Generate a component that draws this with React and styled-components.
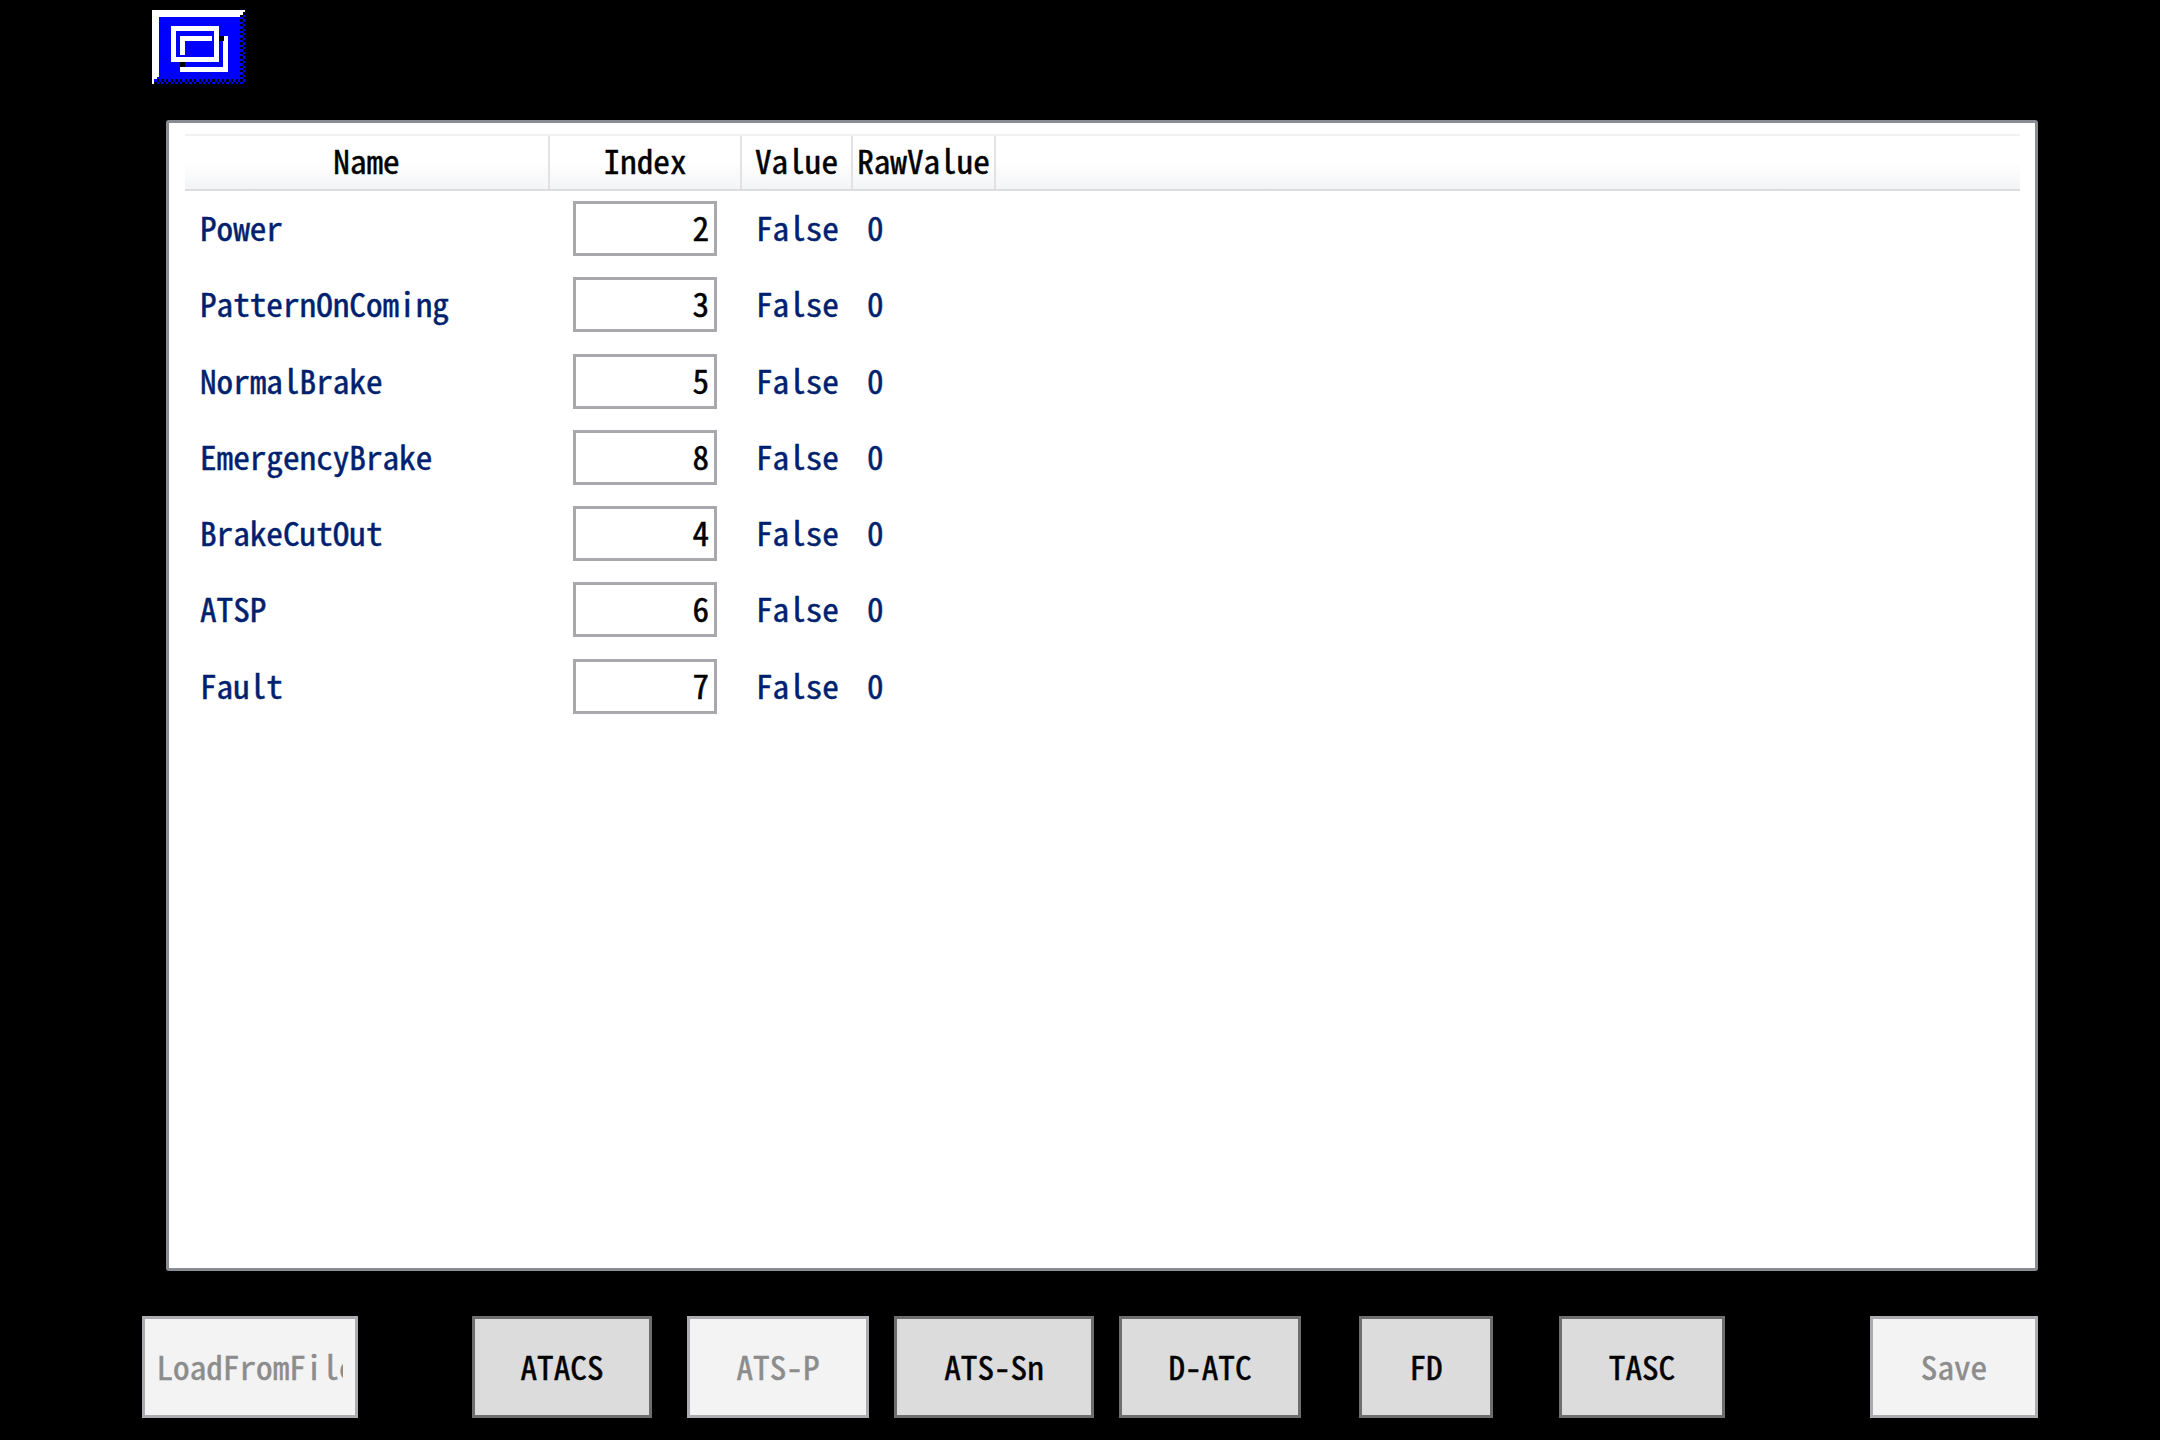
import React from "react";
import styled, { createGlobalStyle } from "styled-components";

const mono = `"Noto Sans Mono CJK JP", "Noto Sans CJK JP", monospace`;

const Global = createGlobalStyle`
  html, body {
    margin: 0;
    background: #000;
  }
`;

const Page = styled.div`
  width: 2160px;
  height: 1440px;
  background: #000;
  font-family: ${mono};
  font-size: 33.2px;
  -webkit-text-stroke: 0.5px currentColor;
  display: flex;
  flex-direction: column;
  overflow: hidden;
`;

const Top = styled.div`
  height: 120px;
  padding: 10px 0 0 152px;
  box-sizing: border-box;
`;

const Panel = styled.div`
  margin-left: 166px;
  width: 1872px;
  height: 1151px;
  box-sizing: border-box;
  background: #fff;
  border: 3px solid #8a8c94;
  border-radius: 3px;
  padding: 11px 15px 0 16px;
`;

const Head = styled.div`
  display: flex;
  height: 57px;
  box-sizing: border-box;
  border-top: 2px solid #f2f2f2;
  border-bottom: 2px solid #dcdcdc;
  background: linear-gradient(#fff 50%, #f3f4f6);
`;

const HeadCell = styled.div`
  width: ${(p) => p.$w}px;
  box-sizing: border-box;
  padding-bottom: 7px;
  border-right: 2px solid #e2e2e2;
  display: flex;
  align-items: center;
  justify-content: center;
  color: #000;
`;

const Rows = styled.div`
  display: flex;
  flex-direction: column;
  gap: 21.3px;
  padding-top: 10px;
`;

const Row = styled.div`
  display: flex;
  align-items: center;
  height: 55px;
  color: #001f6e;
`;

const Name = styled.div`
  width: 388px;
  padding: 0 0 4px 15px;
  box-sizing: border-box;
`;

const IndexBox = styled.div`
  width: 144px;
  height: 55px;
  box-sizing: border-box;
  border: 3px solid #a9a9ad;
  color: #000;
  display: flex;
  align-items: center;
  justify-content: flex-end;
  padding: 0 5px 4px 0;
`;

const Val = styled.div`
  width: ${(p) => p.$w}px;
  margin-left: ${(p) => p.$ml}px;
  padding-bottom: 4px;
`;

const Footer = styled.div`
  display: flex;
  padding: 45px 0 0 142px;
`;

const Btn = styled.div`
  flex: none;
  width: ${(p) => p.$w}px;
  margin-left: ${(p) => p.$ml || 0}px;
  height: 102px;
  box-sizing: border-box;
  display: flex;
  align-items: center;
  justify-content: center;
  overflow: hidden;
  white-space: nowrap;
  padding-bottom: 3px;
  border: 3px solid ${(p) => (p.$off ? "#aaacb0" : "#6e6e6e")};
  background: ${(p) => (p.$off ? "#f3f3f3" : "#dcdcdc")};
  color: ${(p) => (p.$off ? "#8c8c8c" : "#000")};
`;

const Clip = styled.div`
  width: 186px;
  overflow: hidden;
  margin-right: 1px;
`;

const rows = [
  ["Power", 2],
  ["PatternOnComing", 3],
  ["NormalBrake", 5],
  ["EmergencyBrake", 8],
  ["BrakeCutOut", 4],
  ["ATSP", 6],
  ["Fault", 7],
];

// checker edge of the icon, on its 40x32 cell grid
const ditherCells = [];
for (let y = 1; y < 32; y++) {
  for (let x = 1; x < 40; x++) {
    if ((x >= 38 || y >= 30) && (x + y) % 2 === 0) ditherCells.push([x, y]);
  }
}

const AppIcon = () => (
  <svg width="93" height="74" viewBox="0 0 93 74" shapeRendering="crispEdges">
    <rect width="93" height="74" fill="#0000ff" />
    <g transform="scale(2.325 2.3125)">
      {ditherCells.map(([x, y]) => (
        <rect key={x + "-" + y} x={x} y={y} width="1" height="1" fill="#000" />
      ))}
      <path d="M0 0H40V1H39V2H38V3H3V29H2V30H1V32H0Z" fill="#fff" />
    </g>
    <path d="M19 16H67V52H19ZM24 21V47H62V21Z" fill="#fff" fillRule="evenodd" />
    <path d="M28 26H60V31H33V45H28Z" fill="#fff" />
    <path d="M71 26H76V62H28V57H71Z" fill="#fff" />
    <rect x="67" y="26" width="5" height="5" fill="#000" />
    <rect x="28" y="52" width="5" height="5" fill="#000" />
  </svg>
);

export default function App() {
  return (
    <Page>
      <Global />
      <Top>
        <AppIcon />
      </Top>
      <Panel>
        <Head>
          <HeadCell $w={365}>Name</HeadCell>
          <HeadCell $w={192}>Index</HeadCell>
          <HeadCell $w={111}>Value</HeadCell>
          <HeadCell $w={143}>RawValue</HeadCell>
        </Head>
        <Rows>
          {rows.map(([name, idx]) => (
            <Row key={name}>
              <Name>{name}</Name>
              <IndexBox>{idx}</IndexBox>
              <Val $w={111} $ml={39}>False</Val>
              <Val $w={20} $ml={0}>0</Val>
            </Row>
          ))}
        </Rows>
      </Panel>
      <Footer>
        <Btn $w={216} $off><Clip>LoadFromFile</Clip></Btn>
        <Btn $w={180} $ml={114}>ATACS</Btn>
        <Btn $w={182} $ml={35} $off>ATS-P</Btn>
        <Btn $w={200} $ml={25}>ATS-Sn</Btn>
        <Btn $w={182} $ml={25}>D-ATC</Btn>
        <Btn $w={134} $ml={58}>FD</Btn>
        <Btn $w={166} $ml={66}>TASC</Btn>
        <Btn $w={168} $ml={145} $off>Save</Btn>
      </Footer>
    </Page>
  );
}
